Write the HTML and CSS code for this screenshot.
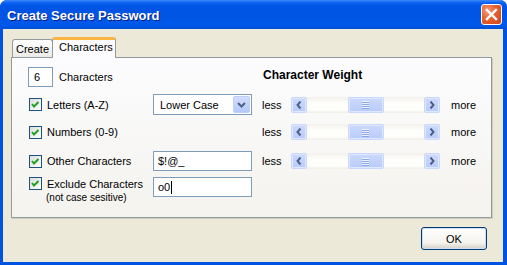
FILE: index.html
```html
<!DOCTYPE html>
<html lang="en">
<head>
  <meta charset="UTF-8">
  <title>Create Secure Password</title>
  <link rel="stylesheet" href="styles.css">
</head>
<body>
  <div class="window">
    <div class="titlebar">
      <span class="title">Create Secure Password</span>
      <div class="close">
        <svg width="21" height="21" viewBox="0 0 21 21"><path d="M6 6 L15 15 M15 6 L6 15" stroke="#fff" stroke-width="2.4" stroke-linecap="square"/></svg>
      </div>
    </div>
    <div class="frame">
      <div class="tabs">
        <div class="tab">Create</div>
        <div class="tab active">Characters</div>
      </div>
      <div class="panel">
        <div class="row first">
          <div class="cell-left">
            <div class="input count">6</div>
            <span class="label-count">Characters</span>
          </div>
          <div class="weight-title">Character Weight</div>
        </div>

        <div class="row r2">
          <div class="cell-left"><span class="check"><svg width="11" height="11" viewBox="0 0 11 11"><polyline points="2,5 4,7.5 8.5,3" fill="none" stroke="#21a121" stroke-width="2"/></svg></span>Letters (A-Z)</div>
          <div class="select"><span>Lower Case</span><span class="drop"><svg width="9" height="6" viewBox="0 0 9 6"><polyline points="1,1 4.5,4.5 8,1" fill="none" stroke="#4d6185" stroke-width="2"/></svg></span></div>
          <span class="less">less</span>
          <div class="scroll">
            <span class="sbtn"><svg width="6" height="8" viewBox="0 0 6 8"><polyline points="4.5,0.5 1.5,4 4.5,7.5" fill="none" stroke="#4d6185" stroke-width="2"/></svg></span>
            <span class="track"></span>
            <span class="thumb"><i></i><i></i><i></i><i></i></span>
            <span class="track"></span>
            <span class="sbtn"><svg width="6" height="8" viewBox="0 0 6 8"><polyline points="1.5,0.5 4.5,4 1.5,7.5" fill="none" stroke="#4d6185" stroke-width="2"/></svg></span>
          </div>
          <span class="more">more</span>
        </div>

        <div class="row r3">
          <div class="cell-left"><span class="check"><svg width="11" height="11" viewBox="0 0 11 11"><polyline points="2,5 4,7.5 8.5,3" fill="none" stroke="#21a121" stroke-width="2"/></svg></span>Numbers (0-9)</div>
          <div></div>
          <span class="less">less</span>
          <div class="scroll">
            <span class="sbtn"><svg width="6" height="8" viewBox="0 0 6 8"><polyline points="4.5,0.5 1.5,4 4.5,7.5" fill="none" stroke="#4d6185" stroke-width="2"/></svg></span>
            <span class="track"></span>
            <span class="thumb"><i></i><i></i><i></i><i></i></span>
            <span class="track"></span>
            <span class="sbtn"><svg width="6" height="8" viewBox="0 0 6 8"><polyline points="1.5,0.5 4.5,4 1.5,7.5" fill="none" stroke="#4d6185" stroke-width="2"/></svg></span>
          </div>
          <span class="more">more</span>
        </div>

        <div class="row r4">
          <div class="cell-left"><span class="check"><svg width="11" height="11" viewBox="0 0 11 11"><polyline points="2,5 4,7.5 8.5,3" fill="none" stroke="#21a121" stroke-width="2"/></svg></span>Other Characters</div>
          <div class="input text">$!@_</div>
          <span class="less">less</span>
          <div class="scroll">
            <span class="sbtn"><svg width="6" height="8" viewBox="0 0 6 8"><polyline points="4.5,0.5 1.5,4 4.5,7.5" fill="none" stroke="#4d6185" stroke-width="2"/></svg></span>
            <span class="track"></span>
            <span class="thumb"><i></i><i></i><i></i><i></i></span>
            <span class="track"></span>
            <span class="sbtn"><svg width="6" height="8" viewBox="0 0 6 8"><polyline points="1.5,0.5 4.5,4 1.5,7.5" fill="none" stroke="#4d6185" stroke-width="2"/></svg></span>
          </div>
          <span class="more">more</span>
        </div>

        <div class="row r5">
          <div class="cell-left stack">
            <div class="line"><span class="check"><svg width="11" height="11" viewBox="0 0 11 11"><polyline points="2,5 4,7.5 8.5,3" fill="none" stroke="#21a121" stroke-width="2"/></svg></span>Exclude Characters</div>
            <div class="note">(not case sesitive)</div>
          </div>
          <div class="input text">o0<span class="caret"></span></div>
        </div>
      </div>
      <div class="actions">
        <div class="ok">OK</div>
      </div>
    </div>
  </div>
</body>
</html>
```

FILE: styles.css
```css
body {
  margin: 0;
  font-family: 'Liberation Sans', Arial, sans-serif;
  font-size: 11px;
  color: #000;
}
.window {
  width: 507px;
  height: 265px;
  display: flex;
  flex-direction: column;
  background: #0053e1;
  border-radius: 7px 7px 0 0;
  overflow: hidden;
}
/* barre de titre */
.titlebar {
  height: 29px;
  flex: none;
  display: flex;
  align-items: center;
  justify-content: space-between;
  padding: 0 5px 0 7px;
  background: linear-gradient(#3b8cf8 0, #0a5ff0 3px, #0055e6 6px, #0054e3 50%, #0058ea 85%, #0050d8 100%);
}
.title {
  color: #fff;
  font-weight: bold;
  font-size: 13px;
  text-shadow: 1px 1px 0 #0a1e82;
  padding-top: 2px;
}
.close {
  width: 21px;
  height: 21px;
  border: 1px solid #fff;
  border-radius: 3px;
  box-sizing: border-box;
  background: radial-gradient(circle at 30% 30%, #f19a7a 0, #e4612f 45%, #cf4418 100%);
  display: flex;
  align-items: center;
  justify-content: center;
}
.close svg { display: block; margin: -1px; }
.frame {
  flex: 1;
  margin: 0 4px 3px 3px;
  background: #ece9d8;
  padding: 8px 11px 0 8px;
  display: flex;
  flex-direction: column;
}
/* onglets */
.tabs {
  display: flex;
  align-items: flex-end;
  margin-left: 1px;
  height: 20px;
  position: relative;
  z-index: 1;
}
.tab {
  height: 18px;
  box-sizing: border-box;
  padding: 3px 0 0 3px;
  border: 1px solid #919b9c;
  border-bottom: none;
  border-radius: 3px 3px 0 0;
  background: linear-gradient(#fff, #ecebe6);
  width: 41px;
  white-space: nowrap;
}
.tab.active {
  width: 64px;
  height: 21px;
  margin-bottom: -1px;
  border-top: 3px solid #f9b542;
  background: #fcfcfe;
  padding: 1px 0 0 6px;
  border-left: 1px solid #919b9c;
  margin-left: -1px;
}
.panel {
  height: 161px;
  box-sizing: border-box;
  border: 1px solid #919b9c;
  background: linear-gradient(#fcfcfe, #f4f3ee);
  padding: 9px 0 0 16px;
  box-shadow: 1px 1px 0 #d0cdbf;
}
.row {
  display: grid;
  grid-template-columns: 125px 109px 29px 160px auto;
  align-items: center;
}
.first { height: 20px; }
.r2 { height: 21px; margin-top: 7px; }
.r3 { height: 20px; margin-top: 7px; }
.r4 { height: 20px; margin-top: 9px; }
.r5 { height: 34px; margin-top: 6px; align-items: start; }
.cell-left {
  display: flex;
  align-items: center;
  gap: 5px;
}
.first .cell-left { gap: 6px; }
.weight-title {
  grid-column: 3 / 6;
  font-weight: bold;
  font-size: 12px;
  padding-left: 1px;
  align-self: start;
  margin-top: 1px;
}
.input {
  height: 20px;
  box-sizing: border-box;
  border: 1px solid #7f9db9;
  background: #fff;
  display: flex;
  align-items: center;
}
.count { width: 25px; padding-left: 5px; }
.text { width: 99px; padding-left: 4px; }
.caret {
  display: inline-block;
  width: 1px;
  height: 13px;
  background: #000;
  margin-left: 1px;
}
.check {
  width: 13px;
  height: 13px;
  box-sizing: border-box;
  border: 1px solid #1c5180;
  background: linear-gradient(135deg, #dcdcd7, #fff);
  display: flex;
  align-items: center;
  justify-content: center;
  margin-left: 1px;
}
.check svg { display: block; }
.select {
  width: 99px;
  height: 21px;
  box-sizing: border-box;
  border: 1px solid #7f9db9;
  background: #fff;
  display: flex;
  align-items: center;
  justify-content: space-between;
  padding: 0 1px 0 6px;
}
.drop {
  width: 17px;
  height: 17px;
  box-sizing: border-box;
  border: 1px solid #bccff8;
  border-radius: 2px;
  background: linear-gradient(#d3defd, #b4c8f8);
  display: flex;
  align-items: center;
  justify-content: center;
}
.drop svg, .sbtn svg { display: block; }
/* barre de défilement */
.scroll {
  width: 149px;
  height: 16px;
  display: flex;
  background: linear-gradient(#f3f1ec, #fefefb 40%, #fefefb 80%, #f0eee6);
}
.sbtn, .thumb {
  height: 16px;
  box-sizing: border-box;
  border: 1px solid #c8d7fb;
  border-radius: 2px;
  background: linear-gradient(#cbd9fd, #b9cbfa);
  box-shadow: inset 0 0 0 1px #e0e8fe;
  display: flex;
  align-items: center;
  justify-content: center;
}
.sbtn { width: 16px; }
.track { flex: 1; }
.thumb {
  width: 36px;
  flex-direction: column;
  gap: 1px;
}
.thumb i {
  display: block;
  width: 7px;
  height: 1px;
  background: #eef3fe;
  border-bottom: 1px solid #8ca7e8;
  margin-bottom: -1px;
}
.stack {
  flex-direction: column;
  align-items: flex-start;
  gap: 2px;
}
.line {
  display: flex;
  align-items: center;
  gap: 5px;
}
.note {
  font-size: 10px;
  padding-left: 18px;
}
.actions {
  display: flex;
  justify-content: flex-end;
  padding: 9px 5px 0 0;
}
.ok {
  width: 66px;
  height: 23px;
  box-sizing: border-box;
  border: 1px solid #003c74;
  border-radius: 3px;
  background: linear-gradient(#fff, #f4f3ee 70%, #d6d0c5);
  box-shadow: inset 0 0 0 1px #cfdcf7;
  display: flex;
  align-items: center;
  justify-content: center;
}
```
